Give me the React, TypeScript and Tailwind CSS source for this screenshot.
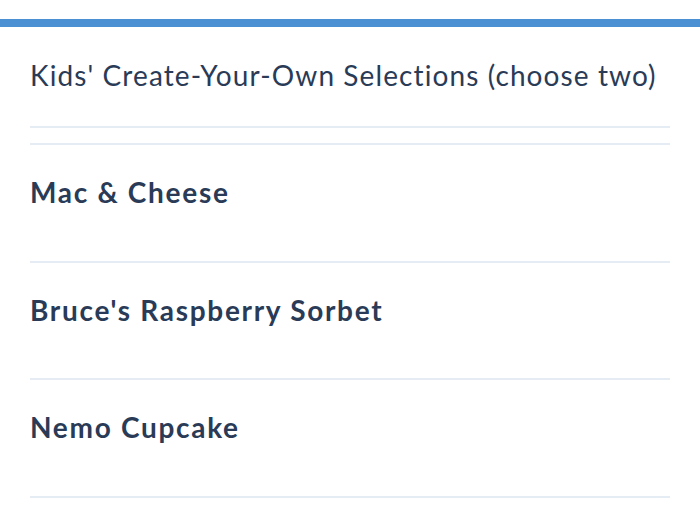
const items = ['Mac & Cheese', "Bruce's Raspberry Sorbet", 'Nemo Cupcake'];

export default function App() {
  return (
    <div className="h-[529px] w-[700px] overflow-hidden bg-white pt-[19px] font-['Lato',sans-serif] text-[#2a3b57]">
      <div className="h-[8px] bg-[#4a90d2]" />
      <div className="px-[30px]">
        <div className="flex h-[101px] items-center border-b-2 border-[#e6ecf4] pb-[4px]">
          <h1 className="text-[28px] leading-[34px] tracking-[1.1px]">Kids' Create-Your-Own Selections (choose two)</h1>
        </div>
        <div className="mt-[15px] border-t-2 border-[#e6ecf4]" />
        {items.map((name) => (
          <div key={name} className="flex h-[117.5px] items-center border-b-2 border-[#e6ecf4] pb-[21px]">
            <span className="text-[28px] font-bold leading-[34px] tracking-[1.7px]">{name}</span>
          </div>
        ))}
      </div>
    </div>
  );
}
